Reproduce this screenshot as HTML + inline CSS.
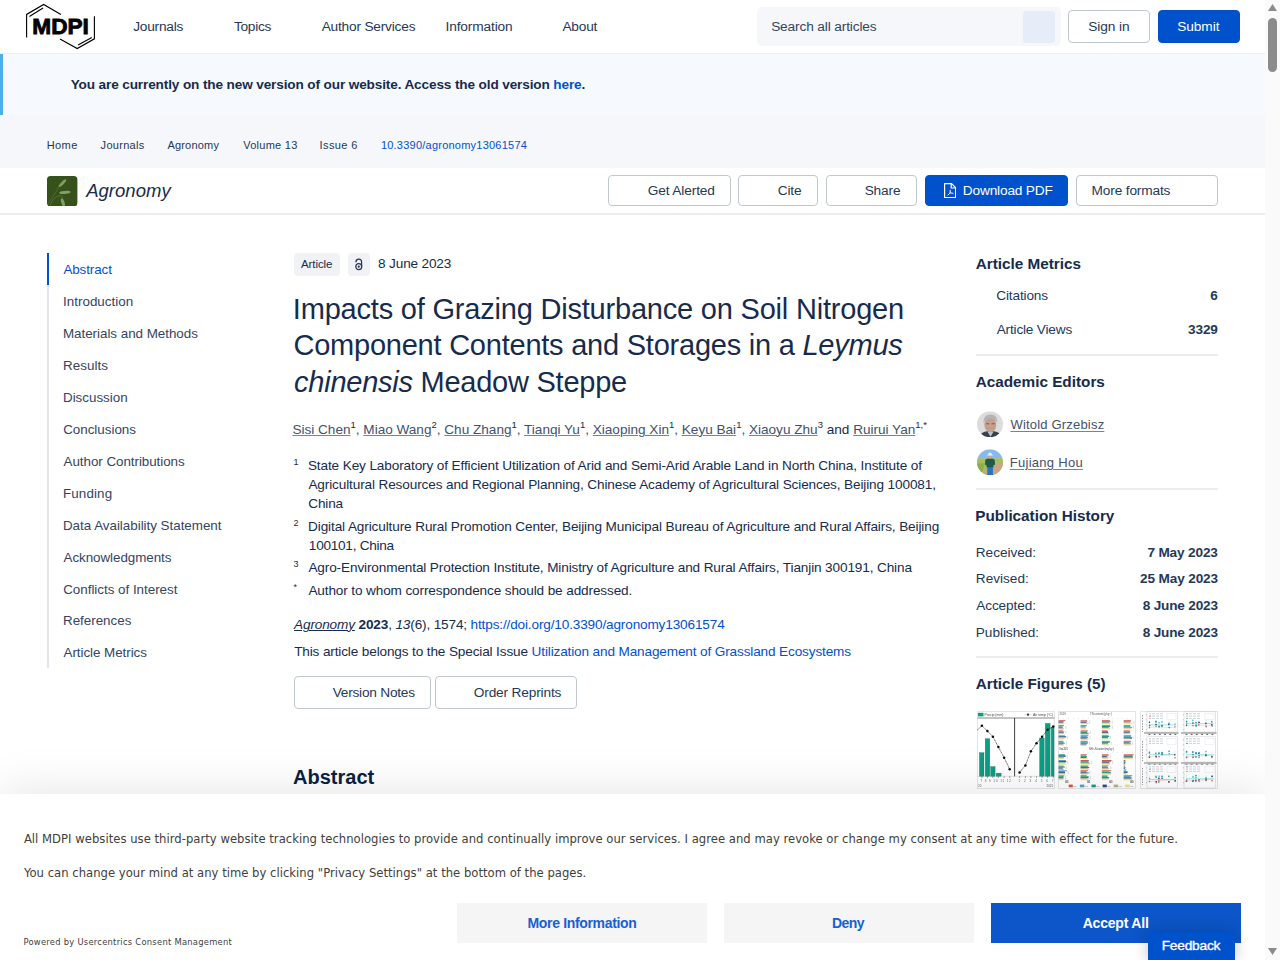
<!DOCTYPE html>
<html lang="en">
<head>
<meta charset="utf-8">
<title>Impacts of Grazing Disturbance on Soil Nitrogen Component Contents and Storages in a Leymus chinensis Meadow Steppe</title>
<style>
*{box-sizing:border-box;margin:0;padding:0}
html,body{width:1280px;height:960px;overflow:hidden;background:#fff}
body{font-family:"Liberation Sans",Arial,sans-serif;color:#172b4d;position:relative;font-size:14px}
a{color:inherit;text-decoration:none}
.abs{position:absolute}
#page{position:absolute;left:0;top:0;width:1265px;height:960px;overflow:hidden;background:#fff}
#hdr{position:absolute;left:0;top:0;width:1265px;height:53.5px;background:#fff;border-bottom:1px solid #eaeff5}
#search{position:absolute;left:756.5px;top:7px;width:304px;height:38.5px;background:#f5f7fa;border-radius:5px}
#search i{position:absolute;left:266.5px;top:3.75px;width:32px;height:32px;background:#e6edf8;border-radius:4px}
.btn{position:absolute;border:1px solid #c1c7d0;border-radius:4px;background:#fff}
.btn.pri{background:#0052cc;border-color:#0052cc}
#notice{position:absolute;left:0;top:53.5px;width:1265px;height:61.5px;background:#f6fafe;border-left:3px solid #4cb0e8}
#crumbs{position:absolute;left:0;top:115px;width:1265px;height:52.5px;background:#f5f7fb}
#jbar{position:absolute;left:0;top:167.5px;width:1265px;height:47px;background:#fff;border-bottom:2px solid #ebedf0}
#toc{position:absolute;left:46.5px;top:253px;width:2px;height:415px;background:#e3e5ea}
#toc b{position:absolute;left:0;top:0;width:2px;height:32px;background:#0052cc}
.tag{position:absolute;background:#f0f2f5;border-radius:4px}
.affn{position:absolute;left:293.5px;font-size:9px;line-height:10px;color:#172b4d;white-space:nowrap}
.hr{position:absolute;left:976px;width:242px;height:2px;background:#ebedf0}
#ck{position:absolute;left:0;top:793.5px;width:1265px;height:167px;background:#fff;box-shadow:0 -2px 46px rgba(0,0,0,.105)}
.cb{position:absolute;top:903.25px;height:39.5px;width:250.5px;background:#f5f5f5}
#fb{position:absolute;left:1148px;top:931.75px;width:86.5px;height:29px;background:#0052cc;box-shadow:0 0 16px rgba(0,0,0,.22)}
#sb{position:absolute;left:1265px;top:0;width:15px;height:960px;background:#fafafa}
#sb i{position:absolute;left:3px;top:18px;width:9px;height:54px;border-radius:5px;background:#8b8b8b}
.t{position:absolute;white-space:nowrap;font-family:"Liberation Sans",Arial,sans-serif}
.t sup{font-size:9.5px;line-height:0;vertical-align:0;position:relative;top:-6px}
.u,#au a{text-decoration:underline;text-underline-offset:1px;text-decoration-thickness:1px;text-decoration-color:#76839b}
#au sup,#au span{color:#172b4d}

</style>
</head>
<body>
<div id="page">

<div id="hdr">
<svg class="abs" style="left:20px;top:0" width="80" height="54" viewBox="20 0 80 54">
<g fill="none" stroke="#000" stroke-width="1.12" stroke-linejoin="miter">
<path d="M26.6 37.6V14.4L43.6 4.5L60.9 14.6"/>
<path d="M29.4 16.4L43.1 8.1"/>
<path d="M94.4 16.2V38.8L77.2 48.6L60 39"/>
<path d="M78.1 45L91.8 37.4"/>
</g>
<text x="32.3" y="34.1" font-family="Liberation Sans, Arial, sans-serif" font-weight="bold" font-size="21.6" textLength="56.6" lengthAdjust="spacingAndGlyphs" fill="#000" stroke="#000" stroke-width=".8">MDPI</text>
</svg>
<div id="search"><i></i></div>
<div class="btn" style="left:1068px;top:10.25px;width:82px;height:32.25px"></div>
<div class="btn pri" style="left:1157.5px;top:10.25px;width:82px;height:32.25px"></div>
</div>

<div id="notice"></div>
<div id="crumbs"></div>

<div id="jbar">
<svg class="abs" style="left:47.2px;top:8.3px" width="30.4" height="30.6" viewBox="0 0 30.4 30.6">
<defs><filter id="bl0"><feGaussianBlur stdDeviation=".45"/></filter></defs>
<rect width="30.4" height="30.6" rx="3.6" fill="#37511c"/>
<g filter="url(#bl0)">
<path d="M.6 28C5 22 9 16 12.300 10" stroke="#4f6c31" stroke-width=".9" fill="none"/>
<path d="M3.100 29.500C5 24 8 20.500 13 19.600c1.500 0 2.200 1.200 2.600 3" stroke="#54733a" stroke-width=".9" fill="none"/>
<ellipse cx="15.400" cy="7.200" rx="1.500" ry="5.100" transform="rotate(44 15.400 7.200)" fill="#7f9f5e"/>
<ellipse cx="17.900" cy="16.400" rx="5.600" ry="1.500" transform="rotate(-3 17.900 16.400)" fill="#82a262"/>
<ellipse cx="15.900" cy="26.600" rx="1.600" ry="4.400" transform="rotate(-18 15.900 26.600)" fill="#7f9f5e"/>
</g></svg>
<div class="btn" style="left:608px;top:7.5px;width:122.5px;height:31px"></div>
<div class="btn" style="left:738.25px;top:7.5px;width:79.5px;height:31px"></div>
<div class="btn" style="left:825.5px;top:7.5px;width:91.25px;height:31px"></div>
<div class="btn pri" style="left:924.5px;top:7.5px;width:143.75px;height:31px">
<svg class="abs" style="left:18.25px;top:7.1px" width="12.2" height="15.2" viewBox="0 0 12.2 15.2" fill="none" stroke="#fff" stroke-width="1.2" stroke-linejoin="round"><path d="M.6 .6H7.600L11.600 4.600V14.600H.6z"/><path d="M7.200 .8V5H11.400"/><path d="M6.200 7.200V9.900L3.900 12.100M6.200 9.900L9 10.300" stroke-width=".95" stroke-linecap="round"/></svg>
</div>
<div class="btn" style="left:1076.25px;top:7.5px;width:141.5px;height:31px"></div>
</div>

<div id="toc"><b></b></div>

<div class="tag" style="left:293.75px;top:252.5px;width:46.25px;height:23px"></div>
<div class="tag" style="left:348.2px;top:252.5px;width:22.3px;height:23px">
<svg class="abs" style="left:6.25px;top:5.5px" width="9.500" height="12.500" viewBox="0 0 10 13" fill="none" stroke="#253858" stroke-width="1.300"><path d="M2 4.300C2 2.300 3.300 1 5 1s3 1.300 3 3.300V9"/><circle cx="5" cy="9" r="3.100"/><circle cx="5" cy="9" r=".5" fill="#253858"/></svg>
</div>

<span class="affn" style="top:456.5px">1</span>
<span class="affn" style="top:517.5px">2</span>
<span class="affn" style="top:558.5px">3</span>
<span class="affn" style="top:582px">*</span>

<div class="btn" style="left:293.75px;top:676.25px;width:137.500px;height:32.25px"></div>
<div class="btn" style="left:435px;top:676.25px;width:142px;height:32.25px"></div>

<div class="hr" style="top:353.75px"></div>
<div class="hr" style="top:488px"></div>
<div class="hr" style="top:656px"></div>

<svg class="abs" style="left:977px;top:410.5px" width="26" height="26.500" viewBox="0 0 26 26">
<defs><clipPath id="cA"><circle cx="13" cy="13" r="13"/></clipPath><filter id="bl1"><feGaussianBlur stdDeviation=".5"/></filter></defs>
<g clip-path="url(#cA)"><rect width="26" height="26" fill="#dcdcdc"/><g filter="url(#bl1)">
<path d="M2 26C3 22 7 20.500 10 20h7c3 .5 7 2 8 6z" fill="#3b3f48"/>
<path d="M10.500 20.500L13.500 25.500 16.500 20.500z" fill="#b9c4d6"/>
<ellipse cx="13.300" cy="13.500" rx="6" ry="7.500" fill="#c6a08c"/>
<path d="M6.500 12C6 6 9 3.200 13.500 3.200S21 6 20.200 12.500C19.500 9 17.500 7.500 13.500 7.500S7.500 9 6.500 12z" fill="#b4b4b4"/>
<path d="M10 17.500c2-1 5-1 7 0" stroke="#a9a29c" stroke-width="1.400" fill="none"/>
<path d="M9 12.500h3.200M14.600 12.500h3.200" stroke="#6b5a52" stroke-width=".9"/>
</g></g></svg>
<svg class="abs" style="left:977px;top:448.750px" width="26" height="26.500" viewBox="0 0 26 26">
<defs><clipPath id="cB"><circle cx="13" cy="13" r="13"/></clipPath></defs>
<g clip-path="url(#cB)"><rect width="26" height="9" fill="#86b9ee"/><rect y="8" width="26" height="1.500" fill="#9fb7d9"/><rect y="9" width="26" height="17" fill="#a7bd62"/>
<g filter="url(#bl1)"><path d="M13 16l13-2v12H5z" fill="#caa681"/><path d="M0 14l8 0 -3 9H0z" fill="#8fae4c"/>
<rect x="10.300" y="17.500" width="5.600" height="8.500" fill="#2e6fc4"/>
<path d="M8.300 10.800C9 9.500 11 9.200 13 9.200s4 .3 4.700 1.600L18 15.500l-1.500.3V18h-7v-2.200L8 15.500z" fill="#1f5b4a"/>
<rect x="11.500" y="5.800" width="3.200" height="3.600" rx="1.400" fill="#d2a58b"/>
<path d="M9.500 6.200h7.200l-1.700-.8c-.2-1.400-.9-2-2-2s-1.700.6-1.900 2z" fill="#f4f4ee"/>
</g></g></svg>
<svg class="abs" style="left:976.500px;top:710.500px" width="78" height="78" viewBox="0 0 78 78"><defs><filter id="bl2"><feGaussianBlur stdDeviation=".35"/></filter></defs><rect x=".5" y=".5" width="77" height="77" fill="#fff" stroke="#e3e5ea"/><g filter="url(#bl2)"><rect x="1" y="1.800" width="5.500" height="3.600" fill="#0f9d82"/><text x="7.500" y="5" font-family="Liberation Sans, Arial, sans-serif" font-size="3.200" fill="#444" textLength="19" lengthAdjust="spacingAndGlyphs">Precip (mm)</text><circle cx="51" cy="3.700" r="1.100" fill="#111"/><path d="M47.500 3.700h7" stroke="#999" stroke-width=".4"/><text x="56" y="5" font-family="Liberation Sans, Arial, sans-serif" font-size="3.200" fill="#444" textLength="20" lengthAdjust="spacingAndGlyphs">Air temp (°C)</text><path d="M.5 7h77" stroke="#555" stroke-width=".7"/><path d="M37.600 7v58.500" stroke="#111" stroke-width=".8"/><path d="M.5 65.300h77" stroke="#bbb" stroke-width=".4"/><rect x="2.4" y="41.7" width="4.6" height="23.5" fill="#0f9d82" stroke="#0a6e5c" stroke-width=".3"/><rect x="8.2" y="27.7" width="4.6" height="37.5" fill="#0f9d82" stroke="#0a6e5c" stroke-width=".3"/><rect x="13.6" y="55.6" width="4.5" height="9.6" fill="#0f9d82" stroke="#0a6e5c" stroke-width=".3"/><rect x="19.2" y="62.1" width="4.9" height="3.1" fill="#0f9d82" stroke="#0a6e5c" stroke-width=".3"/><rect x="62.6" y="27" width="4.6" height="38.2" fill="#0f9d82" stroke="#0a6e5c" stroke-width=".3"/><rect x="68.3" y="12.4" width="4.8" height="52.8" fill="#0f9d82" stroke="#0a6e5c" stroke-width=".3"/><rect x="74.2" y="16" width="2.8" height="49.2" fill="#0f9d82" stroke="#0a6e5c" stroke-width=".3"/><path d="M0.3 19L4.9 14.8L10.4 20.1L15.9 25.7L21.4 36L27.1 46.7L32.7 58.2" stroke="#111" stroke-width=".6" fill="none" stroke-dasharray="1.200 .5"/><circle cx="4.9" cy="14.8" r="1.250" fill="#111"/><circle cx="10.4" cy="20.1" r="1.250" fill="#111"/><circle cx="15.9" cy="25.7" r="1.250" fill="#111"/><circle cx="21.4" cy="36" r="1.250" fill="#111"/><circle cx="27.1" cy="46.7" r="1.250" fill="#111"/><circle cx="32.7" cy="58.2" r="1.250" fill="#111"/><path d="M42.6 61.4L48.4 54.4L53.9 40.3L59.5 32.3L65.1 25.7L70.6 18.8L76.3 15.4" stroke="#111" stroke-width=".6" fill="none" stroke-dasharray="1.200 .5"/><circle cx="42.6" cy="61.4" r="1.250" fill="#111"/><circle cx="48.4" cy="54.4" r="1.250" fill="#111"/><circle cx="53.9" cy="40.3" r="1.250" fill="#111"/><circle cx="59.5" cy="32.3" r="1.250" fill="#111"/><circle cx="65.1" cy="25.7" r="1.250" fill="#111"/><circle cx="70.6" cy="18.8" r="1.250" fill="#111"/><circle cx="76.3" cy="15.4" r="1.250" fill="#111"/><path d="M4.9 65.300v1.600" stroke="#333" stroke-width=".5"/><path d="M10.4 65.300v1.600" stroke="#333" stroke-width=".5"/><path d="M15.9 65.300v1.600" stroke="#333" stroke-width=".5"/><path d="M21.4 65.300v1.600" stroke="#333" stroke-width=".5"/><path d="M27.1 65.300v1.600" stroke="#333" stroke-width=".5"/><path d="M32.7 65.300v1.600" stroke="#333" stroke-width=".5"/><path d="M42.6 65.300v1.600" stroke="#333" stroke-width=".5"/><path d="M48.4 65.300v1.600" stroke="#333" stroke-width=".5"/><path d="M53.9 65.300v1.600" stroke="#333" stroke-width=".5"/><path d="M59.5 65.300v1.600" stroke="#333" stroke-width=".5"/><path d="M65.1 65.300v1.600" stroke="#333" stroke-width=".5"/><path d="M70.6 65.300v1.600" stroke="#333" stroke-width=".5"/><path d="M76.3 65.300v1.600" stroke="#333" stroke-width=".5"/><text x="3.500" y="71" font-family="Liberation Sans, Arial, sans-serif" font-size="3" fill="#666" textLength="30.500">7 8 9 10 11 12</text><text x="41.500" y="71" font-family="Liberation Sans, Arial, sans-serif" font-size="3" fill="#666" textLength="35">1 2 3 4 5 6 7</text><text x="1" y="76" font-family="Liberation Sans, Arial, sans-serif" font-size="3" fill="#666">20</text><text x="69.500" y="76" font-family="Liberation Sans, Arial, sans-serif" font-size="3" fill="#555">2021</text></g></svg>
<svg class="abs" style="left:1058.250px;top:710.500px" width="78" height="78" viewBox="0 0 78 78"><rect x=".5" y=".5" width="77" height="77" fill="#fff" stroke="#e3e5ea"/><g filter="url(#bl2)"><text x="1.500" y="4.300" font-family="Liberation Sans, Arial, sans-serif" font-size="2.800" fill="#555">2019</text><text x="32" y="4.300" font-family="Liberation Sans, Arial, sans-serif" font-size="2.800" fill="#555" textLength="22">TN content (g kg⁻¹)</text><text x="1" y="38.800" font-family="Liberation Sans, Arial, sans-serif" font-size="2.800" fill="#555" textLength="9">Year 2021</text><text x="31" y="38.800" font-family="Liberation Sans, Arial, sans-serif" font-size="2.800" fill="#555" textLength="25">NH₄⁺-N content (mg kg⁻¹)</text><path d="M.5 7.400h77M.5 41.300h77" stroke="#999" stroke-width=".5" stroke-dasharray=".5 4.400"/><rect x="0.6" y="9.2" width="6.8" height="0.9" fill="#d9534a"/><rect x="0.6" y="10" width="5" height="0.9" fill="#4aa8c8"/><rect x="0.6" y="10.8" width="4.7" height="0.9" fill="#2c4a8c"/><rect x="0.6" y="11.7" width="5.6" height="0.9" fill="#b0b48a"/><rect x="0.6" y="12.5" width="5.1" height="0.9" fill="#f0e08a"/><rect x="0.6" y="14.2" width="5.2" height="1.1" fill="#d9534a"/><rect x="0.6" y="15.2" width="3.8" height="1.1" fill="#4aa8c8"/><rect x="0.6" y="16.2" width="4.2" height="1.1" fill="#0f9d82"/><rect x="0.6" y="17.3" width="5.1" height="1.1" fill="#b0b48a"/><path d="M8 14.7v3.1" stroke="#888" stroke-width=".3"/><rect x="0.6" y="19.4" width="4.5" height="0.7" fill="#d9534a"/><rect x="0.6" y="20.1" width="5.8" height="0.7" fill="#4aa8c8"/><rect x="0.6" y="20.7" width="4.1" height="0.7" fill="#0f9d82"/><rect x="0.6" y="21.4" width="5.2" height="0.7" fill="#2c4a8c"/><rect x="0.6" y="22.1" width="5.3" height="0.7" fill="#b0b48a"/><rect x="0.6" y="22.7" width="4.6" height="0.7" fill="#f0e08a"/><path d="M8 19.9v3" stroke="#888" stroke-width=".3"/><rect x="0.6" y="24.3" width="6.4" height="1.1" fill="#4aa8c8"/><rect x="0.6" y="25.3" width="7.6" height="1.1" fill="#2c4a8c"/><rect x="0.6" y="26.4" width="6.1" height="1.1" fill="#b0b48a"/><rect x="0.6" y="27.4" width="5.8" height="1.1" fill="#f0e08a"/><path d="M9.5 24.8v3.1" stroke="#888" stroke-width=".3"/><rect x="0.6" y="29.8" width="4.5" height="1" fill="#d9534a"/><rect x="0.6" y="30.7" width="5.3" height="1" fill="#4aa8c8"/><rect x="0.6" y="31.6" width="6.2" height="1" fill="#0f9d82"/><rect x="0.6" y="32.6" width="4.6" height="1" fill="#2c4a8c"/><rect x="0.6" y="33.5" width="5.5" height="1" fill="#f0e08a"/><path d="M8.5 30.3v3.6" stroke="#888" stroke-width=".3"/><rect x="0.6" y="43.3" width="6.3" height="1.3" fill="#0f9d82"/><rect x="0.6" y="44.5" width="7.1" height="1.3" fill="#2c4a8c"/><rect x="0.6" y="45.7" width="5.2" height="1.3" fill="#b0b48a"/><rect x="0.6" y="46.9" width="5.3" height="1.3" fill="#f0e08a"/><path d="M9.3 43.8v3.8" stroke="#888" stroke-width=".3"/><rect x="0.6" y="49" width="7.3" height="1.2" fill="#4aa8c8"/><rect x="0.6" y="50.1" width="7.7" height="1.2" fill="#2c4a8c"/><rect x="0.6" y="51.3" width="6.3" height="1.2" fill="#b0b48a"/><rect x="0.6" y="52.5" width="7.9" height="1.2" fill="#f0e08a"/><path d="M9.7 49.5v3.6" stroke="#888" stroke-width=".3"/><rect x="0.6" y="54.5" width="5" height="1.1" fill="#4aa8c8"/><rect x="0.6" y="55.5" width="6.2" height="1.1" fill="#0f9d82"/><rect x="0.6" y="56.6" width="4.2" height="1.1" fill="#2c4a8c"/><rect x="0.6" y="57.7" width="5.1" height="1.1" fill="#b0b48a"/><path d="M8.3 55v3.2" stroke="#888" stroke-width=".3"/><rect x="0.6" y="59.3" width="8.4" height="0.9" fill="#4aa8c8"/><rect x="0.6" y="60.2" width="6.3" height="0.9" fill="#0f9d82"/><rect x="0.6" y="61.1" width="6.4" height="0.9" fill="#2c4a8c"/><rect x="0.6" y="61.9" width="6.5" height="0.9" fill="#b0b48a"/><rect x="0.6" y="62.8" width="6.5" height="0.9" fill="#f0e08a"/><path d="M10.2 59.8v3.4" stroke="#888" stroke-width=".3"/><rect x="0.6" y="64.3" width="5.8" height="1" fill="#4aa8c8"/><rect x="0.6" y="65.3" width="5.1" height="1" fill="#0f9d82"/><rect x="0.6" y="66.3" width="4.7" height="1" fill="#2c4a8c"/><rect x="0.6" y="67.2" width="4.9" height="1" fill="#b0b48a"/><rect x="0.6" y="68.2" width="5.1" height="1" fill="#f0e08a"/><path d="M7.6 64.8v3.9" stroke="#888" stroke-width=".3"/><rect x="22.6" y="9.2" width="6.4" height="0.7" fill="#d9534a"/><rect x="22.6" y="9.9" width="6.7" height="0.7" fill="#4aa8c8"/><rect x="22.6" y="10.6" width="6.5" height="0.7" fill="#0f9d82"/><rect x="22.6" y="11.2" width="5.9" height="0.7" fill="#2c4a8c"/><rect x="22.6" y="11.9" width="8" height="0.7" fill="#b0b48a"/><rect x="22.6" y="12.6" width="6.6" height="0.7" fill="#f0e08a"/><path d="M31.7 9.7v3.1" stroke="#888" stroke-width=".3"/><rect x="22.6" y="14.2" width="6.2" height="1.1" fill="#d9534a"/><rect x="22.6" y="15.2" width="4.8" height="1.1" fill="#4aa8c8"/><rect x="22.6" y="16.2" width="5.1" height="1.1" fill="#b0b48a"/><rect x="22.6" y="17.3" width="5.6" height="1.1" fill="#f0e08a"/><rect x="22.6" y="19.4" width="7.2" height="0.9" fill="#d9534a"/><rect x="22.6" y="20.2" width="6.8" height="0.9" fill="#4aa8c8"/><rect x="22.6" y="21" width="6.4" height="0.9" fill="#0f9d82"/><rect x="22.6" y="21.8" width="7.9" height="0.9" fill="#2c4a8c"/><rect x="22.6" y="22.6" width="7.9" height="0.9" fill="#b0b48a"/><path d="M32.3 19.9v3" stroke="#888" stroke-width=".3"/><rect x="22.6" y="24.3" width="7.7" height="0.9" fill="#d9534a"/><rect x="22.6" y="25.1" width="6.5" height="0.9" fill="#4aa8c8"/><rect x="22.6" y="25.9" width="7.4" height="0.9" fill="#0f9d82"/><rect x="22.6" y="26.8" width="6" height="0.9" fill="#2c4a8c"/><rect x="22.6" y="27.6" width="7.9" height="0.9" fill="#b0b48a"/><path d="M32 24.8v3.1" stroke="#888" stroke-width=".3"/><rect x="22.6" y="29.8" width="6.9" height="1" fill="#d9534a"/><rect x="22.6" y="30.7" width="7.3" height="1" fill="#4aa8c8"/><rect x="22.6" y="31.6" width="7.3" height="1" fill="#0f9d82"/><rect x="22.6" y="32.6" width="5.8" height="1" fill="#2c4a8c"/><rect x="22.6" y="33.5" width="5.9" height="1" fill="#b0b48a"/><path d="M31.6 30.3v3.6" stroke="#888" stroke-width=".3"/><rect x="22.6" y="43.3" width="6.1" height="1" fill="#d9534a"/><rect x="22.6" y="44.3" width="5.4" height="1" fill="#4aa8c8"/><rect x="22.6" y="45.2" width="6.4" height="1" fill="#0f9d82"/><rect x="22.6" y="46.2" width="5.8" height="1" fill="#2c4a8c"/><rect x="22.6" y="47.1" width="7" height="1" fill="#f0e08a"/><rect x="22.6" y="49" width="8.2" height="1" fill="#d9534a"/><rect x="22.6" y="49.9" width="7.9" height="1" fill="#4aa8c8"/><rect x="22.6" y="50.8" width="8.2" height="1" fill="#0f9d82"/><rect x="22.6" y="51.8" width="9.5" height="1" fill="#b0b48a"/><rect x="22.6" y="52.7" width="8.6" height="1" fill="#f0e08a"/><path d="M33.3 49.5v3.6" stroke="#888" stroke-width=".3"/><rect x="22.6" y="54.5" width="7.8" height="0.9" fill="#d9534a"/><rect x="22.6" y="55.3" width="7" height="0.9" fill="#0f9d82"/><rect x="22.6" y="56.2" width="8.6" height="0.9" fill="#2c4a8c"/><rect x="22.6" y="57" width="7.4" height="0.9" fill="#b0b48a"/><rect x="22.6" y="57.9" width="8.6" height="0.9" fill="#f0e08a"/><rect x="22.6" y="59.3" width="7.5" height="0.8" fill="#d9534a"/><rect x="22.6" y="60" width="5.8" height="0.8" fill="#4aa8c8"/><rect x="22.6" y="60.8" width="6" height="0.8" fill="#0f9d82"/><rect x="22.6" y="61.5" width="8.2" height="0.8" fill="#2c4a8c"/><rect x="22.6" y="62.2" width="5.7" height="0.8" fill="#b0b48a"/><rect x="22.6" y="63" width="7.1" height="0.8" fill="#f0e08a"/><path d="M31.9 59.8v3.4" stroke="#888" stroke-width=".3"/><rect x="22.6" y="64.3" width="6.1" height="1" fill="#d9534a"/><rect x="22.6" y="65.3" width="8.1" height="1" fill="#0f9d82"/><rect x="22.6" y="66.3" width="7.9" height="1" fill="#2c4a8c"/><rect x="22.6" y="67.2" width="6.3" height="1" fill="#b0b48a"/><rect x="22.6" y="68.2" width="8" height="1" fill="#f0e08a"/><path d="M32.3 64.8v3.9" stroke="#888" stroke-width=".3"/><rect x="43.9" y="9.2" width="7.9" height="0.9" fill="#d9534a"/><rect x="43.9" y="10" width="8.6" height="0.9" fill="#4aa8c8"/><rect x="43.9" y="10.8" width="7.5" height="0.9" fill="#0f9d82"/><rect x="43.9" y="11.7" width="8" height="0.9" fill="#b0b48a"/><rect x="43.9" y="12.5" width="8.8" height="0.9" fill="#f0e08a"/><path d="M54.2 9.7v3.1" stroke="#888" stroke-width=".3"/><rect x="43.9" y="14.2" width="8.2" height="0.9" fill="#d9534a"/><rect x="43.9" y="15" width="8.2" height="0.9" fill="#0f9d82"/><rect x="43.9" y="15.8" width="6.9" height="0.9" fill="#2c4a8c"/><rect x="43.9" y="16.7" width="8" height="0.9" fill="#b0b48a"/><rect x="43.9" y="17.5" width="7.3" height="0.9" fill="#f0e08a"/><path d="M54.4 14.7v3.1" stroke="#888" stroke-width=".3"/><rect x="43.9" y="19.4" width="5.6" height="0.9" fill="#d9534a"/><rect x="43.9" y="20.2" width="6.1" height="0.9" fill="#0f9d82"/><rect x="43.9" y="21" width="6.2" height="0.9" fill="#2c4a8c"/><rect x="43.9" y="21.8" width="6.8" height="0.9" fill="#b0b48a"/><rect x="43.9" y="22.6" width="5.1" height="0.9" fill="#f0e08a"/><rect x="43.9" y="24.3" width="6.8" height="0.9" fill="#d9534a"/><rect x="43.9" y="25.1" width="7.2" height="0.9" fill="#0f9d82"/><rect x="43.9" y="25.9" width="6" height="0.9" fill="#2c4a8c"/><rect x="43.9" y="26.8" width="6.4" height="0.9" fill="#b0b48a"/><rect x="43.9" y="27.6" width="6.2" height="0.9" fill="#f0e08a"/><path d="M52.4 24.8v3.1" stroke="#888" stroke-width=".3"/><rect x="43.9" y="29.8" width="8" height="1" fill="#4aa8c8"/><rect x="43.9" y="30.7" width="7.9" height="1" fill="#0f9d82"/><rect x="43.9" y="31.6" width="6.1" height="1" fill="#2c4a8c"/><rect x="43.9" y="32.6" width="6.7" height="1" fill="#b0b48a"/><rect x="43.9" y="33.5" width="6.6" height="1" fill="#f0e08a"/><path d="M53.2 30.3v3.6" stroke="#888" stroke-width=".3"/><rect x="43.9" y="43.3" width="6.5" height="1" fill="#d9534a"/><rect x="43.9" y="44.3" width="6.8" height="1" fill="#4aa8c8"/><rect x="43.9" y="45.2" width="4.9" height="1" fill="#2c4a8c"/><rect x="43.9" y="46.2" width="6.4" height="1" fill="#b0b48a"/><rect x="43.9" y="47.1" width="6.2" height="1" fill="#f0e08a"/><path d="M52.1 43.8v3.8" stroke="#888" stroke-width=".3"/><rect x="43.9" y="49" width="9.6" height="1" fill="#d9534a"/><rect x="43.9" y="49.9" width="9.2" height="1" fill="#4aa8c8"/><rect x="43.9" y="50.8" width="7.4" height="1" fill="#2c4a8c"/><rect x="43.9" y="51.8" width="8.1" height="1" fill="#b0b48a"/><rect x="43.9" y="52.7" width="8.3" height="1" fill="#f0e08a"/><path d="M54.6 49.5v3.6" stroke="#888" stroke-width=".3"/><rect x="43.9" y="54.5" width="6.4" height="0.9" fill="#d9534a"/><rect x="43.9" y="55.3" width="5.3" height="0.9" fill="#4aa8c8"/><rect x="43.9" y="56.2" width="6.2" height="0.9" fill="#0f9d82"/><rect x="43.9" y="57" width="6.9" height="0.9" fill="#b0b48a"/><rect x="43.9" y="57.9" width="6.6" height="0.9" fill="#f0e08a"/><path d="M52.9 55v3.2" stroke="#888" stroke-width=".3"/><rect x="43.9" y="59.3" width="9.4" height="0.9" fill="#d9534a"/><rect x="43.9" y="60.2" width="7.5" height="0.9" fill="#4aa8c8"/><rect x="43.9" y="61.1" width="9" height="0.9" fill="#0f9d82"/><rect x="43.9" y="61.9" width="9.2" height="0.9" fill="#b0b48a"/><rect x="43.9" y="62.8" width="9.2" height="0.9" fill="#f0e08a"/><rect x="43.9" y="64.3" width="5.7" height="1" fill="#4aa8c8"/><rect x="43.9" y="65.3" width="5.6" height="1" fill="#0f9d82"/><rect x="43.9" y="66.3" width="7.2" height="1" fill="#2c4a8c"/><rect x="43.9" y="67.2" width="6.5" height="1" fill="#b0b48a"/><rect x="43.9" y="68.2" width="5.6" height="1" fill="#f0e08a"/><rect x="65.7" y="9.2" width="7.2" height="1.1" fill="#d9534a"/><rect x="65.7" y="10.2" width="6.9" height="1.1" fill="#4aa8c8"/><rect x="65.7" y="11.2" width="6.6" height="1.1" fill="#b0b48a"/><rect x="65.7" y="12.3" width="9.1" height="1.1" fill="#f0e08a"/><path d="M75.9 9.7v3.1" stroke="#888" stroke-width=".3"/><rect x="65.7" y="14.2" width="6.7" height="0.9" fill="#d9534a"/><rect x="65.7" y="15" width="6.5" height="0.9" fill="#4aa8c8"/><rect x="65.7" y="15.8" width="8.5" height="0.9" fill="#0f9d82"/><rect x="65.7" y="16.7" width="7.7" height="0.9" fill="#b0b48a"/><rect x="65.7" y="17.5" width="7.4" height="0.9" fill="#f0e08a"/><path d="M75.4 14.7v3.1" stroke="#888" stroke-width=".3"/><rect x="65.7" y="19.4" width="6.2" height="0.7" fill="#d9534a"/><rect x="65.7" y="20.1" width="6.6" height="0.7" fill="#4aa8c8"/><rect x="65.7" y="20.7" width="5.7" height="0.7" fill="#0f9d82"/><rect x="65.7" y="21.4" width="6.4" height="0.7" fill="#2c4a8c"/><rect x="65.7" y="22.1" width="5.7" height="0.7" fill="#b0b48a"/><rect x="65.7" y="22.7" width="7.6" height="0.7" fill="#f0e08a"/><rect x="65.7" y="24.3" width="7.4" height="0.9" fill="#d9534a"/><rect x="65.7" y="25.1" width="7.2" height="0.9" fill="#4aa8c8"/><rect x="65.7" y="25.9" width="8.1" height="0.9" fill="#0f9d82"/><rect x="65.7" y="26.8" width="8.3" height="0.9" fill="#2c4a8c"/><rect x="65.7" y="27.6" width="6.5" height="0.9" fill="#f0e08a"/><path d="M75.1 24.8v3.1" stroke="#888" stroke-width=".3"/><rect x="65.7" y="29.8" width="7.4" height="1" fill="#d9534a"/><rect x="65.7" y="30.7" width="5.3" height="1" fill="#4aa8c8"/><rect x="65.7" y="31.6" width="6.9" height="1" fill="#2c4a8c"/><rect x="65.7" y="32.6" width="7.5" height="1" fill="#b0b48a"/><rect x="65.7" y="33.5" width="6.4" height="1" fill="#f0e08a"/><path d="M74.7 30.3v3.6" stroke="#888" stroke-width=".3"/><rect x="65.7" y="43.3" width="10" height="0.9" fill="#d9534a"/><rect x="65.7" y="44.1" width="9" height="0.9" fill="#4aa8c8"/><rect x="65.7" y="44.9" width="8.9" height="0.9" fill="#0f9d82"/><rect x="65.7" y="45.7" width="9.1" height="0.9" fill="#2c4a8c"/><rect x="65.7" y="46.5" width="9.5" height="0.9" fill="#b0b48a"/><rect x="65.7" y="47.3" width="8.7" height="0.9" fill="#f0e08a"/><path d="M77.7 43.8v3.8" stroke="#888" stroke-width=".3"/><rect x="65.7" y="49" width="1.7" height="1" fill="#d9534a"/><rect x="65.7" y="49.9" width="1.6" height="1" fill="#4aa8c8"/><rect x="65.7" y="50.8" width="2" height="1" fill="#0f9d82"/><rect x="65.7" y="51.8" width="1.3" height="1" fill="#2c4a8c"/><rect x="65.7" y="52.7" width="1.8" height="1" fill="#b0b48a"/><rect x="65.7" y="54.5" width="1.3" height="0.9" fill="#d9534a"/><rect x="65.7" y="55.3" width="1.2" height="0.9" fill="#4aa8c8"/><rect x="65.7" y="56.2" width="1.9" height="0.9" fill="#0f9d82"/><rect x="65.7" y="57" width="1.2" height="0.9" fill="#2c4a8c"/><rect x="65.7" y="57.9" width="2.8" height="0.9" fill="#b0b48a"/><rect x="65.7" y="59.3" width="2.5" height="0.9" fill="#4aa8c8"/><rect x="65.7" y="60.2" width="4" height="0.9" fill="#0f9d82"/><rect x="65.7" y="61.1" width="3.8" height="0.9" fill="#2c4a8c"/><rect x="65.7" y="61.9" width="2.2" height="0.9" fill="#b0b48a"/><rect x="65.7" y="62.8" width="4.3" height="0.9" fill="#f0e08a"/><rect x="65.7" y="64.3" width="8.5" height="0.9" fill="#d9534a"/><rect x="65.7" y="65.1" width="6.7" height="0.9" fill="#4aa8c8"/><rect x="65.7" y="65.9" width="7.7" height="0.9" fill="#0f9d82"/><rect x="65.7" y="66.8" width="7.7" height="0.9" fill="#2c4a8c"/><rect x="65.7" y="67.6" width="8.5" height="0.9" fill="#b0b48a"/><rect x="65.7" y="68.4" width="8.4" height="0.9" fill="#f0e08a"/><text x="7" y="72" font-family="Liberation Sans, Arial, sans-serif" font-size="2.600" font-weight="bold" fill="#444">G3</text><text x="29" y="72" font-family="Liberation Sans, Arial, sans-serif" font-size="2.600" font-weight="bold" fill="#444">G1</text><text x="51" y="72" font-family="Liberation Sans, Arial, sans-serif" font-size="2.600" font-weight="bold" fill="#444">G3</text><text x="72" y="72" font-family="Liberation Sans, Arial, sans-serif" font-size="2.600" font-weight="bold" fill="#444">G0</text><rect x="10.7" y="73.600" width="4.1" height="2.700" fill="#d9534a"/><path d="M15.4 75.500h3" stroke="#999" stroke-width=".5"/><rect x="21.9" y="73.600" width="4.4" height="2.700" fill="#4aa8c8"/><path d="M26.9 75.500h3" stroke="#999" stroke-width=".5"/><rect x="33.5" y="73.600" width="4.3" height="2.700" fill="#0f9d82"/><path d="M38.4 75.500h3" stroke="#999" stroke-width=".5"/><rect x="44.6" y="73.600" width="4.2" height="2.700" fill="#2c4a8c"/><path d="M49.4 75.500h3" stroke="#999" stroke-width=".5"/><rect x="55.6" y="73.600" width="4.6" height="2.700" fill="#b0b48a"/><path d="M60.8 75.500h3" stroke="#999" stroke-width=".5"/><rect x="67" y="73.600" width="4.7" height="2.700" fill="#f0e08a"/><path d="M72.3 75.500h3" stroke="#999" stroke-width=".5"/></g></svg>
<svg class="abs" style="left:1140px;top:710.500px" width="78" height="78" viewBox="0 0 78 78"><rect x=".5" y=".5" width="77" height="77" fill="#fff" stroke="#e3e5ea"/><g filter="url(#bl2)"><rect x="7" y="0.8" width="30.5" height="20.2" fill="none" stroke="#c9ccd2" stroke-width=".5"/><path d="M4 22h34.5" stroke="#444" stroke-width=".7"/><circle cx="10" cy="2.8" r=".6" fill="#35c4cf"/><path d="M12 2.8h12" stroke="#9aa" stroke-width=".5" stroke-dasharray="3 1"/><circle cx="10" cy="5.1" r=".6" fill="#1b3f7a"/><path d="M12 5.1h12" stroke="#9aa" stroke-width=".5" stroke-dasharray="3 1"/><circle cx="10" cy="7.4" r=".6" fill="#e8604f"/><path d="M12 7.4h12" stroke="#9aa" stroke-width=".5" stroke-dasharray="3 1"/><rect x="27" y="2.3" width="9" height="6" fill="none" stroke="#ccd" stroke-width=".3"/><path d="M9 13.9H35.5" stroke="#8fe0e6" stroke-width=".9"/><path d="M9 16.1L35.5 16.7" stroke="#f2a79b" stroke-width=".4"/><path d="M9.5 9.9v7" stroke="#bfeef2" stroke-width=".6"/><circle cx="9.4" cy="14.8" r=".8" fill="#35c4cf"/><circle cx="9.4" cy="11.3" r=".8" fill="#1b3f7a"/><circle cx="9.5" cy="16.8" r=".8" fill="#e8604f"/><circle cx="9.6" cy="14.4" r=".8" fill="#12998a"/><path d="M16 9.9v7" stroke="#bfeef2" stroke-width=".6"/><circle cx="16.1" cy="10.4" r=".8" fill="#35c4cf"/><circle cx="16" cy="13.6" r=".8" fill="#1b3f7a"/><circle cx="16.1" cy="15.2" r=".8" fill="#e8604f"/><circle cx="15.9" cy="10.9" r=".8" fill="#12998a"/><path d="M19 9.9v7" stroke="#bfeef2" stroke-width=".6"/><circle cx="19.1" cy="11.7" r=".8" fill="#35c4cf"/><circle cx="19" cy="15.9" r=".8" fill="#e8604f"/><circle cx="19" cy="15.2" r=".8" fill="#12998a"/><path d="M22 9.9v7" stroke="#bfeef2" stroke-width=".6"/><circle cx="21.9" cy="10.9" r=".8" fill="#35c4cf"/><circle cx="21.9" cy="15.1" r=".8" fill="#1b3f7a"/><circle cx="21.8" cy="15.1" r=".8" fill="#e8604f"/><circle cx="22.1" cy="14.6" r=".8" fill="#12998a"/><path d="M29 9.9v7" stroke="#bfeef2" stroke-width=".6"/><circle cx="29" cy="12.2" r=".8" fill="#35c4cf"/><circle cx="28.8" cy="13.4" r=".8" fill="#1b3f7a"/><circle cx="29.2" cy="16.6" r=".8" fill="#12998a"/><path d="M35 9.9v7" stroke="#bfeef2" stroke-width=".6"/><circle cx="35.1" cy="13.3" r=".8" fill="#35c4cf"/><circle cx="34.9" cy="15.7" r=".8" fill="#e8604f"/><path d="M5.8 3.8h1.200" stroke="#777" stroke-width=".4"/><path d="M5.8 8.8h1.200" stroke="#777" stroke-width=".4"/><path d="M5.8 13.8h1.200" stroke="#777" stroke-width=".4"/><path d="M5.8 18.8h1.200" stroke="#777" stroke-width=".4"/><rect x="8.5" y="22.9" width="1.800" height="1.100" fill="#666"/><rect x="13.7" y="22.9" width="1.800" height="1.100" fill="#666"/><rect x="18.9" y="22.9" width="1.800" height="1.100" fill="#666"/><rect x="24.1" y="22.9" width="1.800" height="1.100" fill="#666"/><rect x="29.3" y="22.9" width="1.800" height="1.100" fill="#666"/><rect x="34.5" y="22.9" width="1.800" height="1.100" fill="#666"/><rect x="44" y="0.8" width="31.5" height="20.2" fill="none" stroke="#c9ccd2" stroke-width=".5"/><path d="M41 22h35.5" stroke="#444" stroke-width=".7"/><circle cx="47" cy="2.8" r=".6" fill="#1b3f7a"/><path d="M49 2.8h12" stroke="#9aa" stroke-width=".5" stroke-dasharray="3 1"/><circle cx="47" cy="5.1" r=".6" fill="#e8604f"/><path d="M49 5.1h12" stroke="#9aa" stroke-width=".5" stroke-dasharray="3 1"/><circle cx="47" cy="7.4" r=".6" fill="#12998a"/><path d="M49 7.4h12" stroke="#9aa" stroke-width=".5" stroke-dasharray="3 1"/><rect x="65" y="2.3" width="9" height="6" fill="none" stroke="#ccd" stroke-width=".3"/><path d="M46 12.6H73.5" stroke="#8fe0e6" stroke-width=".9"/><path d="M46 14.8L73.5 14.2" stroke="#f2a79b" stroke-width=".4"/><path d="M46.5 8.6v7" stroke="#bfeef2" stroke-width=".6"/><circle cx="46.7" cy="12.4" r=".8" fill="#35c4cf"/><circle cx="46.5" cy="14.3" r=".8" fill="#1b3f7a"/><circle cx="46.7" cy="10.6" r=".8" fill="#12998a"/><path d="M53 8.6v7" stroke="#bfeef2" stroke-width=".6"/><circle cx="52.8" cy="9.3" r=".8" fill="#35c4cf"/><circle cx="52.9" cy="12" r=".8" fill="#1b3f7a"/><circle cx="52.9" cy="14.5" r=".8" fill="#e8604f"/><path d="M56 8.6v7" stroke="#bfeef2" stroke-width=".6"/><circle cx="56.1" cy="13.9" r=".8" fill="#35c4cf"/><circle cx="56.1" cy="15" r=".8" fill="#1b3f7a"/><circle cx="56" cy="11.5" r=".8" fill="#12998a"/><path d="M59 8.6v7" stroke="#bfeef2" stroke-width=".6"/><circle cx="59" cy="11.4" r=".8" fill="#1b3f7a"/><circle cx="58.8" cy="13.9" r=".8" fill="#e8604f"/><path d="M66 8.6v7" stroke="#bfeef2" stroke-width=".6"/><circle cx="65.9" cy="15" r=".8" fill="#35c4cf"/><circle cx="65.9" cy="12.4" r=".8" fill="#1b3f7a"/><circle cx="66.2" cy="15.7" r=".8" fill="#e8604f"/><path d="M72 8.6v7" stroke="#bfeef2" stroke-width=".6"/><circle cx="72.2" cy="14.9" r=".8" fill="#35c4cf"/><circle cx="71.8" cy="13.7" r=".8" fill="#1b3f7a"/><circle cx="72.1" cy="14.7" r=".8" fill="#e8604f"/><circle cx="71.8" cy="10.9" r=".8" fill="#12998a"/><path d="M42.8 3.8h1.200" stroke="#777" stroke-width=".4"/><path d="M42.8 8.8h1.200" stroke="#777" stroke-width=".4"/><path d="M42.8 13.8h1.200" stroke="#777" stroke-width=".4"/><path d="M42.8 18.8h1.200" stroke="#777" stroke-width=".4"/><rect x="45.5" y="22.9" width="1.800" height="1.100" fill="#666"/><rect x="50.7" y="22.9" width="1.800" height="1.100" fill="#666"/><rect x="55.9" y="22.9" width="1.800" height="1.100" fill="#666"/><rect x="61.1" y="22.9" width="1.800" height="1.100" fill="#666"/><rect x="66.3" y="22.9" width="1.800" height="1.100" fill="#666"/><rect x="71.5" y="22.9" width="1.800" height="1.100" fill="#666"/><rect x="7" y="25.8" width="30.5" height="25.2" fill="none" stroke="#c9ccd2" stroke-width=".5"/><path d="M4 52h34.5" stroke="#444" stroke-width=".7"/><circle cx="10" cy="27.8" r=".6" fill="#e8604f"/><path d="M12 27.8h12" stroke="#9aa" stroke-width=".5" stroke-dasharray="3 1"/><circle cx="10" cy="30.1" r=".6" fill="#12998a"/><path d="M12 30.1h12" stroke="#9aa" stroke-width=".5" stroke-dasharray="3 1"/><circle cx="10" cy="32.4" r=".6" fill="#35c4cf"/><path d="M12 32.4h12" stroke="#9aa" stroke-width=".5" stroke-dasharray="3 1"/><rect x="27" y="27.3" width="9" height="6" fill="none" stroke="#ccd" stroke-width=".3"/><path d="M9 43.6H35.5" stroke="#8fe0e6" stroke-width=".9"/><path d="M9 45.8L35.5 43.3" stroke="#f2a79b" stroke-width=".4"/><path d="M9.5 39.6v7" stroke="#bfeef2" stroke-width=".6"/><circle cx="9.4" cy="42.3" r=".8" fill="#35c4cf"/><circle cx="9.4" cy="46.3" r=".8" fill="#1b3f7a"/><circle cx="9.5" cy="45.4" r=".8" fill="#e8604f"/><circle cx="9.4" cy="41.2" r=".8" fill="#12998a"/><path d="M16 39.6v7" stroke="#bfeef2" stroke-width=".6"/><circle cx="16" cy="45.8" r=".8" fill="#35c4cf"/><circle cx="16.2" cy="45.8" r=".8" fill="#1b3f7a"/><circle cx="15.9" cy="45.1" r=".8" fill="#e8604f"/><circle cx="15.8" cy="42.3" r=".8" fill="#12998a"/><path d="M19 39.6v7" stroke="#bfeef2" stroke-width=".6"/><circle cx="19" cy="41.8" r=".8" fill="#35c4cf"/><circle cx="19" cy="45.7" r=".8" fill="#e8604f"/><circle cx="18.9" cy="42.5" r=".8" fill="#12998a"/><path d="M22 39.6v7" stroke="#bfeef2" stroke-width=".6"/><circle cx="22.2" cy="41.9" r=".8" fill="#35c4cf"/><circle cx="22.1" cy="43.3" r=".8" fill="#1b3f7a"/><circle cx="21.9" cy="41.8" r=".8" fill="#12998a"/><path d="M29 39.6v7" stroke="#bfeef2" stroke-width=".6"/><circle cx="29.2" cy="42.9" r=".8" fill="#35c4cf"/><circle cx="29.1" cy="40.3" r=".8" fill="#12998a"/><path d="M35 39.6v7" stroke="#bfeef2" stroke-width=".6"/><circle cx="34.8" cy="43.8" r=".8" fill="#1b3f7a"/><circle cx="35.1" cy="46.7" r=".8" fill="#e8604f"/><path d="M5.8 28.8h1.200" stroke="#777" stroke-width=".4"/><path d="M5.8 33.8h1.200" stroke="#777" stroke-width=".4"/><path d="M5.8 38.8h1.200" stroke="#777" stroke-width=".4"/><path d="M5.8 43.8h1.200" stroke="#777" stroke-width=".4"/><rect x="8.5" y="52.9" width="1.800" height="1.100" fill="#666"/><rect x="13.7" y="52.9" width="1.800" height="1.100" fill="#666"/><rect x="18.9" y="52.9" width="1.800" height="1.100" fill="#666"/><rect x="24.1" y="52.9" width="1.800" height="1.100" fill="#666"/><rect x="29.3" y="52.9" width="1.800" height="1.100" fill="#666"/><rect x="34.5" y="52.9" width="1.800" height="1.100" fill="#666"/><rect x="44" y="25.8" width="31.5" height="25.2" fill="none" stroke="#c9ccd2" stroke-width=".5"/><path d="M41 52h35.5" stroke="#444" stroke-width=".7"/><circle cx="47" cy="27.8" r=".6" fill="#12998a"/><path d="M49 27.8h12" stroke="#9aa" stroke-width=".5" stroke-dasharray="3 1"/><circle cx="47" cy="30.1" r=".6" fill="#35c4cf"/><path d="M49 30.1h12" stroke="#9aa" stroke-width=".5" stroke-dasharray="3 1"/><circle cx="47" cy="32.4" r=".6" fill="#1b3f7a"/><path d="M49 32.4h12" stroke="#9aa" stroke-width=".5" stroke-dasharray="3 1"/><rect x="65" y="27.3" width="9" height="6" fill="none" stroke="#ccd" stroke-width=".3"/><path d="M46 43.8H73.5" stroke="#8fe0e6" stroke-width=".9"/><path d="M46 46L73.5 44" stroke="#f2a79b" stroke-width=".4"/><path d="M46.5 39.8v7" stroke="#bfeef2" stroke-width=".6"/><circle cx="46.5" cy="41.3" r=".8" fill="#35c4cf"/><circle cx="46.6" cy="46.3" r=".8" fill="#1b3f7a"/><circle cx="46.5" cy="46.6" r=".8" fill="#e8604f"/><circle cx="46.6" cy="40.6" r=".8" fill="#12998a"/><path d="M53 39.8v7" stroke="#bfeef2" stroke-width=".6"/><circle cx="53.1" cy="46.1" r=".8" fill="#35c4cf"/><circle cx="52.9" cy="41.1" r=".8" fill="#1b3f7a"/><circle cx="52.8" cy="46.4" r=".8" fill="#e8604f"/><circle cx="53" cy="43.6" r=".8" fill="#12998a"/><path d="M56 39.8v7" stroke="#bfeef2" stroke-width=".6"/><circle cx="56" cy="41.7" r=".8" fill="#35c4cf"/><circle cx="56" cy="42.2" r=".8" fill="#1b3f7a"/><circle cx="56" cy="45.9" r=".8" fill="#12998a"/><path d="M59 39.8v7" stroke="#bfeef2" stroke-width=".6"/><circle cx="59.2" cy="41.9" r=".8" fill="#35c4cf"/><circle cx="58.8" cy="42.3" r=".8" fill="#1b3f7a"/><circle cx="59" cy="46.4" r=".8" fill="#e8604f"/><circle cx="59.2" cy="44.5" r=".8" fill="#12998a"/><path d="M66 39.8v7" stroke="#bfeef2" stroke-width=".6"/><circle cx="65.9" cy="40.5" r=".8" fill="#35c4cf"/><circle cx="65.9" cy="44.6" r=".8" fill="#1b3f7a"/><circle cx="65.9" cy="43.5" r=".8" fill="#12998a"/><path d="M72 39.8v7" stroke="#bfeef2" stroke-width=".6"/><circle cx="71.9" cy="45.5" r=".8" fill="#1b3f7a"/><circle cx="71.9" cy="46.5" r=".8" fill="#e8604f"/><path d="M42.8 28.8h1.200" stroke="#777" stroke-width=".4"/><path d="M42.8 33.8h1.200" stroke="#777" stroke-width=".4"/><path d="M42.8 38.8h1.200" stroke="#777" stroke-width=".4"/><path d="M42.8 43.8h1.200" stroke="#777" stroke-width=".4"/><rect x="45.5" y="52.9" width="1.800" height="1.100" fill="#666"/><rect x="50.7" y="52.9" width="1.800" height="1.100" fill="#666"/><rect x="55.9" y="52.9" width="1.800" height="1.100" fill="#666"/><rect x="61.1" y="52.9" width="1.800" height="1.100" fill="#666"/><rect x="66.3" y="52.9" width="1.800" height="1.100" fill="#666"/><rect x="71.5" y="52.9" width="1.800" height="1.100" fill="#666"/><rect x="7" y="53.8" width="30.5" height="23.2" fill="none" stroke="#c9ccd2" stroke-width=".5"/><circle cx="10" cy="55.8" r=".6" fill="#35c4cf"/><path d="M12 55.8h12" stroke="#9aa" stroke-width=".5" stroke-dasharray="3 1"/><circle cx="10" cy="58.1" r=".6" fill="#1b3f7a"/><path d="M12 58.1h12" stroke="#9aa" stroke-width=".5" stroke-dasharray="3 1"/><circle cx="10" cy="60.4" r=".6" fill="#e8604f"/><path d="M12 60.4h12" stroke="#9aa" stroke-width=".5" stroke-dasharray="3 1"/><rect x="27" y="55.3" width="9" height="6" fill="none" stroke="#ccd" stroke-width=".3"/><path d="M9 68.5H35.5" stroke="#8fe0e6" stroke-width=".9"/><path d="M9 70.7L35.5 68.5" stroke="#f2a79b" stroke-width=".4"/><path d="M9.5 64.5v7" stroke="#bfeef2" stroke-width=".6"/><circle cx="9.6" cy="67.6" r=".8" fill="#35c4cf"/><circle cx="9.4" cy="70.5" r=".8" fill="#e8604f"/><path d="M16 64.5v7" stroke="#bfeef2" stroke-width=".6"/><circle cx="15.8" cy="65.3" r=".8" fill="#35c4cf"/><circle cx="16.2" cy="70.7" r=".8" fill="#1b3f7a"/><circle cx="16.2" cy="71.7" r=".8" fill="#e8604f"/><circle cx="16.2" cy="66.2" r=".8" fill="#12998a"/><path d="M19 64.5v7" stroke="#bfeef2" stroke-width=".6"/><circle cx="19.1" cy="65.2" r=".8" fill="#35c4cf"/><circle cx="18.9" cy="67.4" r=".8" fill="#1b3f7a"/><circle cx="18.9" cy="69.7" r=".8" fill="#e8604f"/><circle cx="18.8" cy="71" r=".8" fill="#12998a"/><path d="M22 64.5v7" stroke="#bfeef2" stroke-width=".6"/><circle cx="22.1" cy="67.3" r=".8" fill="#1b3f7a"/><circle cx="22" cy="65.3" r=".8" fill="#12998a"/><path d="M29 64.5v7" stroke="#bfeef2" stroke-width=".6"/><circle cx="28.9" cy="70.8" r=".8" fill="#35c4cf"/><circle cx="28.8" cy="70.7" r=".8" fill="#1b3f7a"/><circle cx="29.1" cy="71.3" r=".8" fill="#e8604f"/><circle cx="28.8" cy="65.2" r=".8" fill="#12998a"/><path d="M35 64.5v7" stroke="#bfeef2" stroke-width=".6"/><circle cx="35.2" cy="69.7" r=".8" fill="#1b3f7a"/><circle cx="35.2" cy="70.3" r=".8" fill="#e8604f"/><circle cx="35.1" cy="66.7" r=".8" fill="#12998a"/><path d="M5.8 56.8h1.200" stroke="#777" stroke-width=".4"/><path d="M5.8 61.8h1.200" stroke="#777" stroke-width=".4"/><path d="M5.8 66.8h1.200" stroke="#777" stroke-width=".4"/><path d="M5.8 71.8h1.200" stroke="#777" stroke-width=".4"/><rect x="8.5" y="78.9" width="1.800" height="1.100" fill="#666"/><rect x="13.7" y="78.9" width="1.800" height="1.100" fill="#666"/><rect x="18.9" y="78.9" width="1.800" height="1.100" fill="#666"/><rect x="24.1" y="78.9" width="1.800" height="1.100" fill="#666"/><rect x="29.3" y="78.9" width="1.800" height="1.100" fill="#666"/><rect x="34.5" y="78.9" width="1.800" height="1.100" fill="#666"/><rect x="44" y="53.8" width="31.5" height="23.2" fill="none" stroke="#c9ccd2" stroke-width=".5"/><circle cx="47" cy="55.8" r=".6" fill="#1b3f7a"/><path d="M49 55.8h12" stroke="#9aa" stroke-width=".5" stroke-dasharray="3 1"/><circle cx="47" cy="58.1" r=".6" fill="#e8604f"/><path d="M49 58.1h12" stroke="#9aa" stroke-width=".5" stroke-dasharray="3 1"/><circle cx="47" cy="60.4" r=".6" fill="#12998a"/><path d="M49 60.4h12" stroke="#9aa" stroke-width=".5" stroke-dasharray="3 1"/><rect x="65" y="55.3" width="9" height="6" fill="none" stroke="#ccd" stroke-width=".3"/><path d="M46 67.8H73.5" stroke="#8fe0e6" stroke-width=".9"/><path d="M46 70L73.5 68.1" stroke="#f2a79b" stroke-width=".4"/><path d="M46.5 63.8v7" stroke="#bfeef2" stroke-width=".6"/><circle cx="46.7" cy="69.1" r=".8" fill="#35c4cf"/><circle cx="46.3" cy="70.3" r=".8" fill="#1b3f7a"/><circle cx="46.7" cy="70" r=".8" fill="#e8604f"/><path d="M53 63.8v7" stroke="#bfeef2" stroke-width=".6"/><circle cx="53" cy="65.9" r=".8" fill="#35c4cf"/><circle cx="52.9" cy="70.2" r=".8" fill="#1b3f7a"/><circle cx="53.1" cy="69.5" r=".8" fill="#12998a"/><path d="M56 63.8v7" stroke="#bfeef2" stroke-width=".6"/><circle cx="55.9" cy="66.4" r=".8" fill="#35c4cf"/><circle cx="55.8" cy="69.2" r=".8" fill="#1b3f7a"/><circle cx="55.9" cy="70.5" r=".8" fill="#e8604f"/><circle cx="56" cy="64.5" r=".8" fill="#12998a"/><path d="M59 63.8v7" stroke="#bfeef2" stroke-width=".6"/><circle cx="59.2" cy="70.5" r=".8" fill="#35c4cf"/><circle cx="58.8" cy="69.2" r=".8" fill="#e8604f"/><circle cx="59" cy="68.8" r=".8" fill="#12998a"/><path d="M66 63.8v7" stroke="#bfeef2" stroke-width=".6"/><circle cx="66" cy="66.9" r=".8" fill="#35c4cf"/><circle cx="66.1" cy="69" r=".8" fill="#1b3f7a"/><circle cx="66.1" cy="69.3" r=".8" fill="#e8604f"/><circle cx="65.9" cy="67.9" r=".8" fill="#12998a"/><path d="M72 63.8v7" stroke="#bfeef2" stroke-width=".6"/><circle cx="71.9" cy="65.6" r=".8" fill="#35c4cf"/><circle cx="72.2" cy="65.3" r=".8" fill="#1b3f7a"/><circle cx="72" cy="69.7" r=".8" fill="#e8604f"/><path d="M42.8 56.8h1.200" stroke="#777" stroke-width=".4"/><path d="M42.8 61.8h1.200" stroke="#777" stroke-width=".4"/><path d="M42.8 66.8h1.200" stroke="#777" stroke-width=".4"/><path d="M42.8 71.8h1.200" stroke="#777" stroke-width=".4"/><rect x="45.5" y="78.9" width="1.800" height="1.100" fill="#666"/><rect x="50.7" y="78.9" width="1.800" height="1.100" fill="#666"/><rect x="55.9" y="78.9" width="1.800" height="1.100" fill="#666"/><rect x="61.1" y="78.9" width="1.800" height="1.100" fill="#666"/><rect x="66.3" y="78.9" width="1.800" height="1.100" fill="#666"/><rect x="71.5" y="78.9" width="1.800" height="1.100" fill="#666"/><path d="M2.500 4v17M2.500 30v20M2.500 57v17" stroke="#555" stroke-width=".6" stroke-dasharray="1.500 1.200"/></g></svg>

<div id="ck"></div>
<div class="cb" style="left:456.75px"></div>
<div class="cb" style="left:723.500px"></div>
<div class="cb" style="left:990.500px;background:#0c56c9"></div>
<div id="fb"></div>

<span class="t" id="n1" style="left:133.22px;top:18px;font-size:13.7px;line-height:17px;letter-spacing:-0.23px;color:#253858">Journals</span>
<span class="t" id="n2" style="left:233.89px;top:18px;font-size:13.7px;line-height:17px;letter-spacing:-0.25px;color:#253858">Topics</span>
<span class="t" id="n3" style="left:321.68px;top:18px;font-size:13.7px;line-height:17px;letter-spacing:-0.2px;color:#253858">Author Services</span>
<span class="t" id="n4" style="left:445.54px;top:18px;font-size:13.7px;line-height:17px;letter-spacing:-0.13px;color:#253858">Information</span>
<span class="t" id="n5" style="left:562.43px;top:18px;font-size:13.7px;line-height:17px;letter-spacing:-0.2px;color:#253858">About</span>
<span class="t" id="se" style="left:771.13px;top:18px;font-size:13.7px;line-height:17px;letter-spacing:-0.14px;color:#344563">Search all articles</span>
<span class="t" id="si" style="left:1088.13px;top:18px;font-size:13.7px;line-height:17px;letter-spacing:-0.05px;color:#253858">Sign in</span>
<span class="t" id="su" style="left:1177.23px;top:18px;font-size:13.7px;line-height:17px;letter-spacing:-0.07px;color:#fff">Submit</span>
<span class="t" id="no" style="left:70.67px;top:76px;font-size:13.6px;line-height:17px;letter-spacing:-0.13px;color:#172b4d;font-weight:bold">You are currently on the new version of our website. Access the old version <a style="color:#0052cc">here</a>.</span>
<span class="t" id="c1" style="left:46.67px;top:138px;font-size:11px;line-height:14px;letter-spacing:0.42px;color:#253858">Home</span>
<span class="t" id="c2" style="left:100.62px;top:138px;font-size:11px;line-height:14px;letter-spacing:0.28px;color:#253858">Journals</span>
<span class="t" id="c3" style="left:167.42px;top:138px;font-size:11px;line-height:14px;letter-spacing:0.2px;color:#253858">Agronomy</span>
<span class="t" id="c4" style="left:243.15px;top:138px;font-size:11px;line-height:14px;letter-spacing:0.27px;color:#253858">Volume 13</span>
<span class="t" id="c5" style="left:319.59px;top:138px;font-size:11px;line-height:14px;letter-spacing:0.38px;color:#253858">Issue 6</span>
<span class="t" id="c6" style="left:380.9px;top:138px;font-size:11px;line-height:14px;letter-spacing:0.23px;color:#0052cc">10.3390/agronomy13061574</span>
<span class="t" id="jn" style="left:86.16px;top:179px;font-size:18.5px;line-height:23px;letter-spacing:0.03px;color:#172b4d;font-style:italic">Agronomy</span>
<span class="t" id="b1" style="left:647.79px;top:182px;font-size:13.7px;line-height:17px;letter-spacing:-0.13px;color:#253858">Get Alerted</span>
<span class="t" id="b2" style="left:777.79px;top:182px;font-size:13.7px;line-height:17px;letter-spacing:-0.18px;color:#253858">Cite</span>
<span class="t" id="b3" style="left:864.63px;top:182px;font-size:13.7px;line-height:17px;letter-spacing:-0.13px;color:#253858">Share</span>
<span class="t" id="b4" style="left:962.82px;top:182px;font-size:13.7px;line-height:17px;letter-spacing:-0.18px;color:#fff">Download PDF</span>
<span class="t" id="b5" style="left:1091.57px;top:182px;font-size:13.7px;line-height:17px;letter-spacing:-0.16px;color:#253858">More formats</span>
<span class="t" id="t1" style="left:63.42px;top:261px;font-size:13.4px;line-height:17px;letter-spacing:-0.09px;color:#0052cc">Abstract</span>
<span class="t" id="t2" style="left:62.94px;top:293px;font-size:13.4px;line-height:17px;letter-spacing:0.03px;color:#344563">Introduction</span>
<span class="t" id="t3" style="left:62.97px;top:325px;font-size:13.4px;line-height:17px;letter-spacing:-0.03px;color:#344563">Materials and Methods</span>
<span class="t" id="t4" style="left:62.97px;top:357px;font-size:13.4px;line-height:17px;letter-spacing:0.05px;color:#344563">Results</span>
<span class="t" id="t5" style="left:62.97px;top:389px;font-size:13.4px;line-height:17px;letter-spacing:-0.01px;color:#344563">Discussion</span>
<span class="t" id="t6" style="left:63.19px;top:421px;font-size:13.4px;line-height:17px;letter-spacing:-0.02px;color:#344563">Conclusions</span>
<span class="t" id="t7" style="left:63.57px;top:453px;font-size:13.4px;line-height:17px;letter-spacing:-0.05px;color:#344563">Author Contributions</span>
<span class="t" id="t8" style="left:62.97px;top:485px;font-size:13.4px;line-height:17px;letter-spacing:0.12px;color:#344563">Funding</span>
<span class="t" id="t9" style="left:62.97px;top:517px;font-size:13.4px;line-height:17px;letter-spacing:-0.02px;color:#344563">Data Availability Statement</span>
<span class="t" id="t10" style="left:63.57px;top:549px;font-size:13.4px;line-height:17px;letter-spacing:-0.06px;color:#344563">Acknowledgments</span>
<span class="t" id="t11" style="left:63.19px;top:581px;font-size:13.4px;line-height:17px;letter-spacing:-0.02px;color:#344563">Conflicts of Interest</span>
<span class="t" id="t12" style="left:62.97px;top:612px;font-size:13.4px;line-height:17px;letter-spacing:-0.01px;color:#344563">References</span>
<span class="t" id="t13" style="left:63.57px;top:644px;font-size:13.4px;line-height:17px;letter-spacing:-0.05px;color:#344563">Article Metrics</span>
<span class="t" id="ar" style="left:300.93px;top:257px;font-size:11.5px;line-height:14px;letter-spacing:-0.06px;color:#172b4d">Article</span>
<span class="t" id="dt" style="left:378.09px;top:255px;font-size:13.6px;line-height:17px;letter-spacing:-0.16px;color:#172b4d">8 June 2023</span>
<span class="t" id="h1a" style="left:292.82px;top:291px;font-size:29px;line-height:36px;letter-spacing:-0.2px;color:#172b4d">Impacts of Grazing Disturbance on Soil Nitrogen</span>
<span class="t" id="h1b" style="left:293.47px;top:327px;font-size:29px;line-height:36px;letter-spacing:-0.23px;color:#172b4d">Component Contents and Storages in a <i>Leymus</i></span>
<span class="t" id="h1c" style="left:294.12px;top:364px;font-size:29px;line-height:36px;letter-spacing:-0.25px;color:#172b4d"><i>chinensis</i> Meadow Steppe</span>
<span class="t" id="au" style="left:292.4px;top:421px;font-size:13.6px;line-height:17px;letter-spacing:-0.01px;color:#42526e"><a>Sisi Chen</a><sup>1</sup>, <a>Miao Wang</a><sup>2</sup>, <a>Chu Zhang</a><sup>1</sup>, <a>Tianqi Yu</a><sup>1</sup>, <a>Xiaoping Xin</a><sup>1</sup>, <a>Keyu Bai</a><sup>1</sup>, <a>Xiaoyu Zhu</a><sup>3</sup> <span>and</span> <a>Ruirui Yan</a><sup>1,*</sup></span>
<span class="t" id="a1a" style="left:307.9px;top:457px;font-size:13.6px;line-height:17px;letter-spacing:-0.12px;color:#172b4d">State Key Laboratory of Efficient Utilization of Arid and Semi-Arid Arable Land in North China, Institute of</span>
<span class="t" id="a1b" style="left:308.43px;top:476px;font-size:13.6px;line-height:17px;letter-spacing:-0.13px;color:#172b4d">Agricultural Resources and Regional Planning, Chinese Academy of Agricultural Sciences, Beijing 100081,</span>
<span class="t" id="a1c" style="left:308.29px;top:495px;font-size:13.6px;line-height:17px;letter-spacing:-0.18px;color:#172b4d">China</span>
<span class="t" id="a2a" style="left:308.07px;top:518px;font-size:13.6px;line-height:17px;letter-spacing:-0.12px;color:#172b4d">Digital Agriculture Rural Promotion Center, Beijing Municipal Bureau of Agriculture and Rural Affairs, Beijing</span>
<span class="t" id="a2b" style="left:308.84px;top:537px;font-size:13.6px;line-height:17px;letter-spacing:-0.26px;color:#172b4d">100101, China</span>
<span class="t" id="a3" style="left:308.43px;top:559px;font-size:13.6px;line-height:17px;letter-spacing:-0.13px;color:#172b4d">Agro-Environmental Protection Institute, Ministry of Agriculture and Rural Affairs, Tianjin 300191, China</span>
<span class="t" id="a4" style="left:308.43px;top:582px;font-size:13.6px;line-height:17px;letter-spacing:-0.13px;color:#172b4d">Author to whom correspondence should be addressed.</span>
<span class="t" id="ci" style="left:294.1px;top:616px;font-size:13.6px;line-height:17px;letter-spacing:-0.15px;color:#172b4d"><a class="u" style="font-style:italic;text-decoration-color:#172b4d">Agronomy</a> <b>2023</b>, <i>13</i>(6), 1574; <a style="color:#0052cc">https://doi.org/10.3390/agronomy13061574</a></span>
<span class="t" id="sp" style="left:294.14px;top:643px;font-size:13.6px;line-height:17px;letter-spacing:-0.14px;color:#172b4d">This article belongs to the Special Issue <a style="color:#0052cc">Utilization and Management of Grassland Ecosystems</a></span>
<span class="t" id="vn" style="left:332.65px;top:684px;font-size:13.7px;line-height:17px;letter-spacing:-0.23px;color:#253858">Version Notes</span>
<span class="t" id="or" style="left:473.82px;top:684px;font-size:13.7px;line-height:17px;letter-spacing:-0.17px;color:#253858">Order Reprints</span>
<span class="t" id="ab" style="left:293.06px;top:765px;font-size:20px;line-height:25px;letter-spacing:0.01px;color:#091e42;font-weight:bold">Abstract</span>
<span class="t" id="r1" style="left:975.65px;top:254px;font-size:15.3px;line-height:19px;letter-spacing:0px;color:#172b4d;font-weight:bold">Article Metrics</span>
<span class="t" id="r2" style="left:996.29px;top:287px;font-size:13.6px;line-height:17px;letter-spacing:-0.14px;color:#253858">Citations</span>
<span class="t" id="r3" style="left:1210.21px;top:287px;font-size:13.6px;line-height:17px;letter-spacing:0.36px;color:#253858;font-weight:bold">6</span>
<span class="t" id="r4" style="left:996.68px;top:321px;font-size:13.6px;line-height:17px;letter-spacing:-0.17px;color:#253858">Article Views</span>
<span class="t" id="r5" style="left:1188.06px;top:321px;font-size:13.6px;line-height:17px;letter-spacing:-0.13px;color:#253858;font-weight:bold">3329</span>
<span class="t" id="r6" style="left:975.65px;top:372px;font-size:15.3px;line-height:19px;letter-spacing:0px;color:#172b4d;font-weight:bold">Academic Editors</span>
<span class="t" id="r7" style="left:1010.46px;top:417px;font-size:13px;line-height:16px;letter-spacing:0.19px;color:#42526e"><a class="u" style="text-underline-offset:1.5px">Witold Grzebisz</a></span>
<span class="t" id="r8" style="left:1009.84px;top:455px;font-size:13px;line-height:16px;letter-spacing:0.27px;color:#42526e"><a class="u" style="text-underline-offset:1.5px">Fujiang Hou</a></span>
<span class="t" id="r9" style="left:975.34px;top:506px;font-size:15.3px;line-height:19px;letter-spacing:-0.02px;color:#172b4d;font-weight:bold">Publication History</span>
<span class="t" id="r10" style="left:975.82px;top:544px;font-size:13.6px;line-height:17px;letter-spacing:-0.03px;color:#253858">Received:</span>
<span class="t" id="r11" style="left:1147.39px;top:544px;font-size:13.6px;line-height:17px;letter-spacing:-0.14px;color:#253858;font-weight:bold">7 May 2023</span>
<span class="t" id="r12" style="left:975.82px;top:570px;font-size:13.6px;line-height:17px;letter-spacing:0.01px;color:#253858">Revised:</span>
<span class="t" id="r13" style="left:1140px;top:570px;font-size:13.6px;line-height:17px;letter-spacing:-0.13px;color:#253858;font-weight:bold">25 May 2023</span>
<span class="t" id="r14" style="left:976.18px;top:597px;font-size:13.6px;line-height:17px;letter-spacing:-0.07px;color:#253858">Accepted:</span>
<span class="t" id="r15" style="left:1142.75px;top:597px;font-size:13.6px;line-height:17px;letter-spacing:-0.18px;color:#253858;font-weight:bold">8 June 2023</span>
<span class="t" id="r16" style="left:975.82px;top:624px;font-size:13.6px;line-height:17px;letter-spacing:-0.02px;color:#253858">Published:</span>
<span class="t" id="r17" style="left:1142.75px;top:624px;font-size:13.6px;line-height:17px;letter-spacing:-0.18px;color:#253858;font-weight:bold">8 June 2023</span>
<span class="t" id="r18" style="left:975.65px;top:674px;font-size:15.3px;line-height:19px;letter-spacing:0px;color:#172b4d;font-weight:bold">Article Figures (5)</span>
<span class="t" id="k1" style="left:23.9px;top:831px;font-size:12.9px;line-height:16px;letter-spacing:0.03px;color:#404040;font-family:'DejaVu Sans Condensed','DejaVu Sans',sans-serif">All MDPI websites use third-party website tracking technologies to provide and continually improve our services. I agree and may revoke or change my consent at any time with effect for the future.</span>
<span class="t" id="k2" style="left:24.12px;top:865px;font-size:12.9px;line-height:16px;letter-spacing:0.02px;color:#404040;font-family:'DejaVu Sans Condensed','DejaVu Sans',sans-serif">You can change your mind at any time by clicking "Privacy Settings" at the bottom of the pages.</span>
<span class="t" id="k3" style="left:23.46px;top:936px;font-size:9.3px;line-height:12px;letter-spacing:0.26px;color:#404040;font-family:'DejaVu Sans Condensed','DejaVu Sans',sans-serif">Powered by Usercentrics Consent Management</span>
<span class="t" id="k4" style="left:527.55px;top:914px;font-size:14px;line-height:18px;letter-spacing:-0.34px;color:#1560d4;font-weight:bold">More Information</span>
<span class="t" id="k5" style="left:832.05px;top:914px;font-size:14px;line-height:18px;letter-spacing:-0.62px;color:#1560d4;font-weight:bold">Deny</span>
<span class="t" id="k6" style="left:1082.68px;top:914px;font-size:14px;line-height:18px;letter-spacing:-0.2px;color:#fff;font-weight:bold">Accept All</span>
<span class="t" id="fbt" style="left:1161.67px;top:937px;font-size:13.7px;line-height:17px;letter-spacing:-0.19px;color:#fff;-webkit-text-stroke:.35px #fff">Feedback</span>

</div>
<div id="sb"><i></i>
<svg class="abs" style="left:3px;top:4px" width="9" height="7" viewBox="0 0 9 7"><path d="M4.500 0L9 7H0z" fill="#8b8b8b"/></svg>
<svg class="abs" style="left:3px;top:948px" width="9" height="7" viewBox="0 0 9 7"><path d="M0 0h9L4.500 7z" fill="#8b8b8b"/></svg>
</div>
</body>
</html>
